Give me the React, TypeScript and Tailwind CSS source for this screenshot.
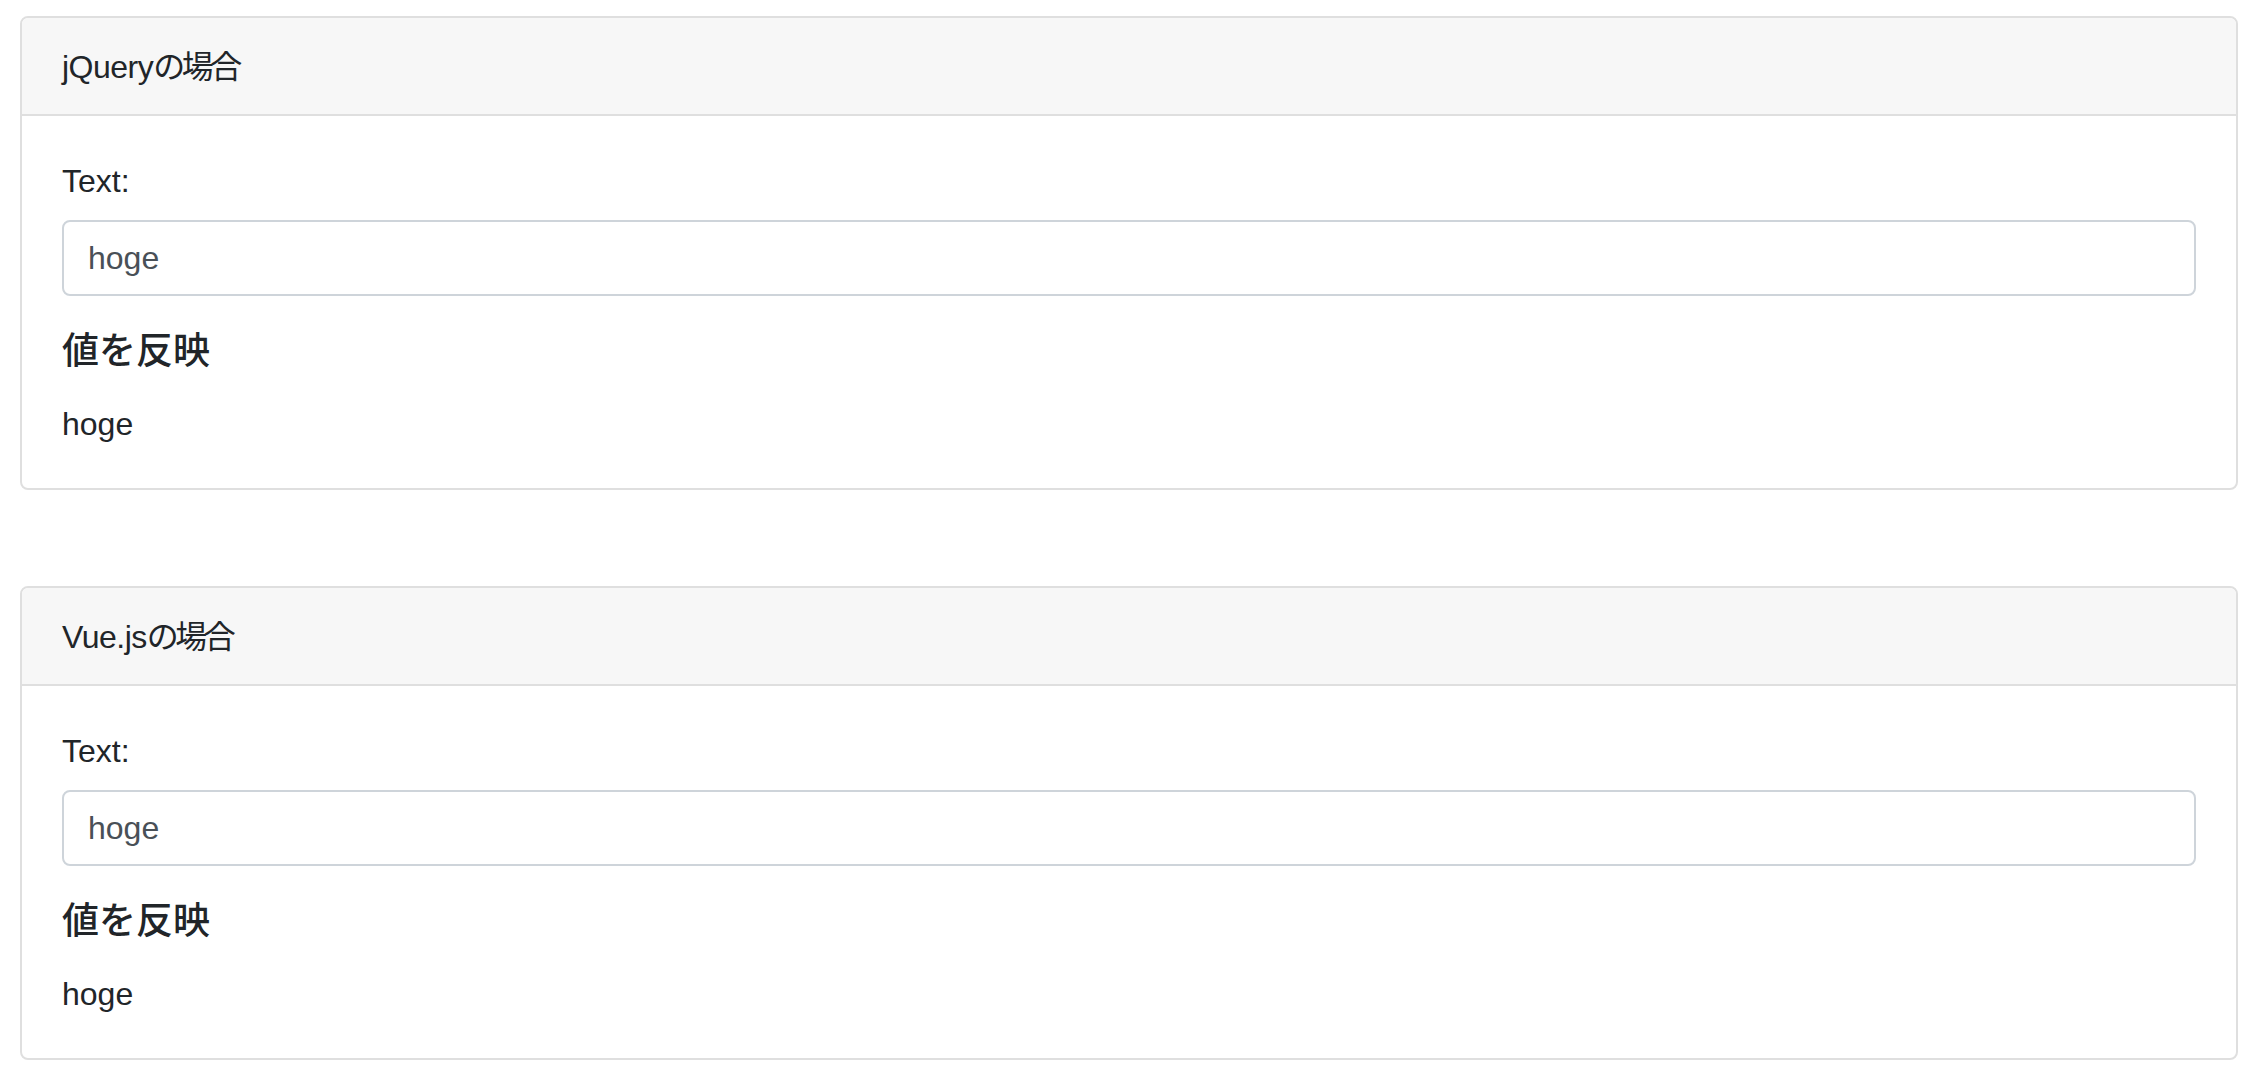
import React from 'react';

interface CardProps {
  name: string;
}

function BindingCard({ name }: CardProps) {
  return (
    <div className="rounded-lg border-2 border-[#dfdfdf] bg-white">
      {/* header */}
      <div className="rounded-t-md border-b-2 border-[#dfdfdf] bg-[#f7f7f7] px-10 pt-[25px] pb-[23px] text-[32px] leading-[48px]">
        <span className="tracking-[-0.5px]">{name}</span>
        <span className="tracking-[-3.5px]">の場合</span>
      </div>
      {/* body */}
      <div className="px-10 pt-[41px] pb-10">
        <label className="mb-[15px] block text-[32px] leading-[48px]">Text:</label>
        <input
          type="text"
          className="block h-[76px] w-full rounded-lg border-2 border-[#ced4da] bg-white px-6 text-[32px] text-[#495057] outline-none"
          defaultValue="hoge"
        />
        <h5 className="mt-8 mb-[24px] text-[37px] font-medium leading-[48px]">値を反映</h5>
        <p className="text-[32px] leading-[48px]">hoge</p>
      </div>
    </div>
  );
}

export default function App() {
  return (
    <div className="min-h-screen bg-white px-5 pt-4 font-['Liberation_Sans','Noto_Sans_CJK_JP',sans-serif] text-[#212529]">
      <BindingCard name="jQuery" />
      <div className="h-[96px]" />
      <BindingCard name="Vue.js" />
    </div>
  );
}
